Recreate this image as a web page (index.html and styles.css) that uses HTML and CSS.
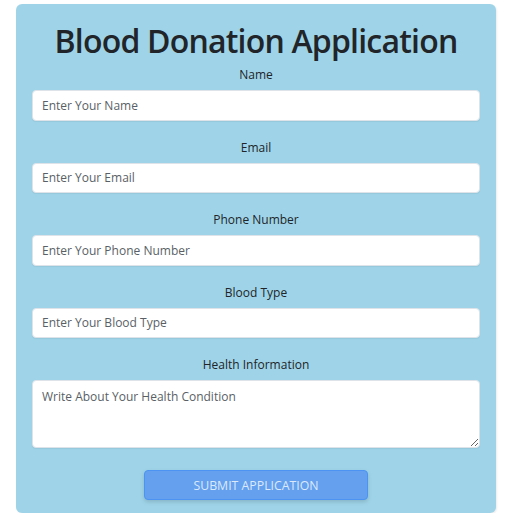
FILE: index.html
```html
<!DOCTYPE html>
<html lang="en">
<head>
<meta charset="utf-8">
<title>Blood Donation Application</title>
<link rel="stylesheet" href="styles.css">
</head>
<body>
<form class="card">
  <h1 class="title">Blood Donation Application</h1>
  <div class="group">
    <label class="label" for="name">Name</label>
    <input class="field" id="name" type="text" placeholder="Enter Your Name">
  </div>
  <div class="group">
    <label class="label" for="email">Email</label>
    <input class="field" id="email" type="email" placeholder="Enter Your Email">
  </div>
  <div class="group">
    <label class="label" for="phone">Phone Number</label>
    <input class="field" id="phone" type="text" placeholder="Enter Your Phone Number">
  </div>
  <div class="group">
    <label class="label" for="blood">Blood Type</label>
    <input class="field" id="blood" type="text" placeholder="Enter Your Blood Type">
  </div>
  <div class="group group-last">
    <label class="label" for="health">Health Information</label>
    <textarea class="field area" id="health" placeholder="Write About Your Health Condition"></textarea>
  </div>
  <div class="actions">
    <button class="submit" type="button">Submit Application</button>
  </div>
</form>
</body>
</html>
```
FILE: styles.css
```css
* { box-sizing: border-box; }
html, body { margin: 0; padding: 0; background: #ffffff; }
body {
  font-family: "Open Sans", "Noto Sans", sans-serif;
  color: #212529;
  padding: 4px 0 0 16px;
}
.card {
  width: 480px;
  background: #9fd4e8;
  border-radius: 6px;
  padding: 17px 16px 13px;
  box-shadow: 1px 1px 2px rgba(0, 0, 0, 0.08);
  display: flex;
  flex-direction: column;
}
.title {
  margin: 0 0 4px;
  text-align: center;
  font-size: 32px;
  letter-spacing: -0.8px;
  font-weight: 600;
  line-height: 40px;
  color: #212529;
}
.group {
  display: flex;
  flex-direction: column;
  margin-bottom: 17px;
}
.group-last { margin-bottom: 22px; }
.label {
  text-align: center;
  font-size: 12px;
  line-height: 20px;
  margin-bottom: 5px;
}
.field {
  width: 100%;
  height: 30.5px;
  border: 1px solid #dde3e8;
  border-radius: 4px;
  background: #fff;
  padding: 0 9px;
  font-family: inherit;
  font-size: 12px;
  color: #212529;
  box-shadow: 0 1px 1px rgba(0, 0, 0, 0.06);
}
.field::placeholder { color: #595f66; opacity: 1; }
.area {
  height: 68px;
  padding: 7px 9px;
  line-height: 18px;
  resize: vertical;
}
.actions { display: flex; justify-content: center; }
.submit {
  width: 224px;
  height: 30px;
  background: #64a0ee;
  border: 1px solid #4d94f2;
  border-radius: 4px;
  color: #dbe9fb;
  font-family: inherit;
  font-size: 12.3px;
  text-transform: uppercase;
  box-shadow: 0 2px 4px rgba(0, 0, 0, 0.15);
}
```
